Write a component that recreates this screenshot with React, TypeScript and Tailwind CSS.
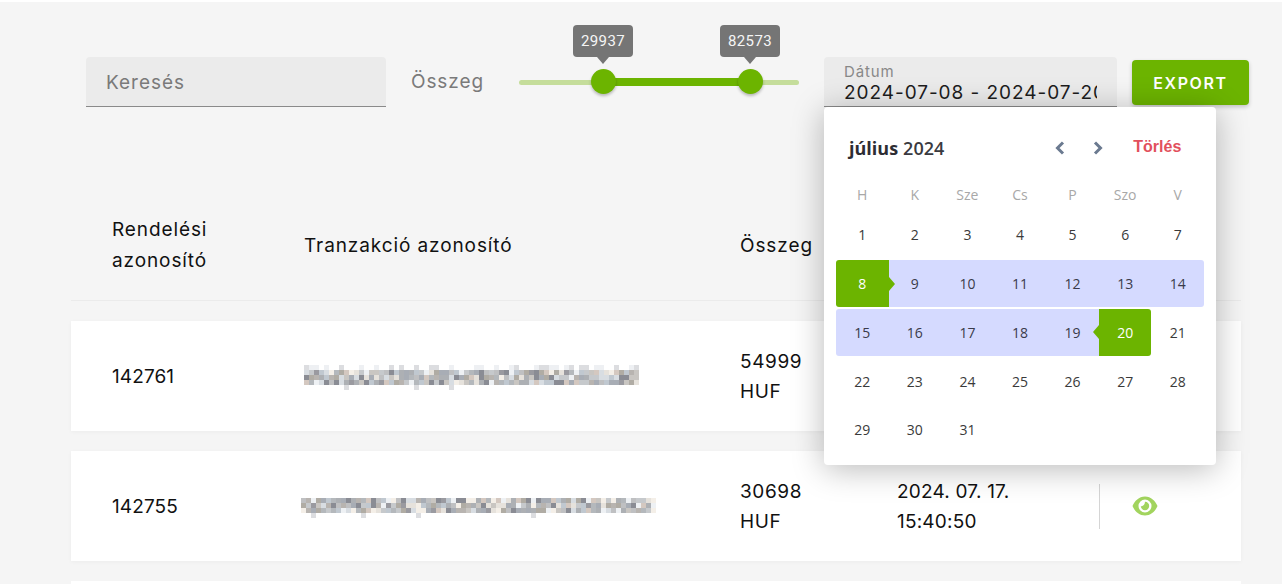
import React from 'react';

const rows = [
  { id: '142761', amount: '54999', seed: 7, width: 67, sparseTop: true, pos: 'mt-[3px]' },
  { id: '142755', amount: '30698', date: '2024. 07. 17.', time: '15:40:50', seed: 23, width: 71, sparseTop: false, pos: 'mt-[4px] -ml-[3px]' },
];

const weekDays = ['H', 'K', 'Sze', 'Cs', 'P', 'Szo', 'V'];
const tints = ['#b8b4b0', '#a8adb5', '#c9c6c2', '#d8dde2', '#9a9aa0', '#c0c8d0', '#e6e2dc', '#b0aca4', '#8a8c94', '#eef1f4', '#d4c8c0', '#bfc0c2', '#adb0b4', '#c6c9cc', '#f4efe8', '#b4b8bc'];

// blurred transaction id, 5px mosaic
const Mosaic: React.FC<{ seed: number; width: number; sparseTop: boolean }> = ({ seed, width, sparseTop }) => {
  const cells: React.ReactNode[] = [];
  let n = seed * 7919;
  const next = () => {
    n = (n * 1103515245 + 12345) & 0x7fffffff;
    return (n >> 16) & 0xff;
  };
  const top = sparseTop ? 1 : 0;
  for (let y = 0; y < top + 4; y++) {
    const sparse = (sparseTop && y === 0) || y === top + 3;
    for (let x = 0; x < width; x++) {
      const r = next();
      if (sparse && y !== 0 && r > 12) continue;
      if (sparse && y === 0 && r > 110) continue;
      const fill = sparse ? (r % 2 ? '#eef0f3' : '#dcdde0') : tints[r % tints.length];
      cells.push(<rect key={`${x}-${y}`} x={x * 5} y={y * 5} width={5} height={5} fill={fill} />);
    }
  }
  return (
    <svg className="block" width={width * 5} height={(top + 4) * 5} shapeRendering="crispEdges">
      {cells}
    </svg>
  );
};

const Thumb: React.FC<{ value: string; className: string }> = ({ value, className }) => (
  <div className={`absolute -top-[32px] w-[60px] flex flex-col items-center ${className}`}>
    <div className="w-[60px] h-[32px] rounded-[4px] bg-[#757575] text-[#f5f5f5] text-[15px] tracking-[0.4px] flex items-center justify-center font-['Roboto',sans-serif]">
      {value}
    </div>
    <div className="w-0 h-0 border-x-[6px] border-x-transparent border-t-[7px] border-t-[#757575]" />
    <div className="w-[25px] h-[25px] rounded-full bg-[#6cb400] mt-[5px] shadow-[0_2px_3px_rgba(0,0,0,0.25)]" />
  </div>
);

const Day: React.FC<{ day: number }> = ({ day }) => {
  const start = day === 8;
  const end = day === 20;
  const inRange = day >= 8 && day <= 20;
  let cls = 'text-[#3a3a3a]';
  if (start || end) cls = 'bg-[#6cb400] text-white';
  else if (inRange) cls = 'bg-[#d5daff] text-[#3a3a4a]';
  if (start || day === 15) cls += ' rounded-l-[3px]';
  if (day === 14 || end) cls += ' rounded-r-[3px]';
  return (
    <div className={`relative h-[47px] flex items-center justify-center text-[14px] ${cls}`}>
      {day}
      {start && <span className="absolute z-10 left-full w-0 h-0 border-y-[7px] border-y-transparent border-l-[6px] border-l-[#6cb400]" />}
      {end && <span className="absolute z-10 right-full w-0 h-0 border-y-[7px] border-y-transparent border-r-[6px] border-r-[#6cb400]" />}
    </div>
  );
};

const Calendar: React.FC = () => (
  <div className="absolute left-0 top-[50px] w-[392px] h-[358px] bg-white rounded-[4px] shadow-[0_4px_32px_rgba(0,0,0,0.28)] z-20 px-3 font-['Open_Sans',sans-serif]">
    <div className="flex items-center h-[82px] pl-[13px]">
      <span className="text-[18px] font-bold text-[#2d2d33]">július</span>
      <span className="text-[18px] font-semibold text-[#3a3a40] ml-[5px]">2024</span>
      <svg className="ml-[110px]" width="12" height="14" viewBox="0 0 12 14" fill="none" stroke="#6b7a90" strokeWidth="3"><path d="M9 1.5 3.5 7 9 12.5" /></svg>
      <svg className="ml-[26px]" width="12" height="14" viewBox="0 0 12 14" fill="none" stroke="#6b7a90" strokeWidth="3"><path d="M3 1.5 8.5 7 3 12.5" /></svg>
      <span className="ml-[29px] -mt-[2px] text-[16px] font-bold text-[#e2505c] font-['Liberation_Sans',sans-serif]">Törlés</span>
    </div>
    <div className="grid grid-cols-7 h-[16px] items-center -mt-[5px] text-[14px] text-[#a8a8a8] text-center">
      {weekDays.map((d) => <div key={d}>{d}</div>)}
    </div>
    <div className="grid grid-cols-7 gap-y-[1.75px] mt-[11.25px]">
      {Array.from({ length: 31 }, (_, i) => <Day key={i} day={i + 1} />)}
    </div>
  </div>
);

const App: React.FC = () => (
  <div className="w-[1282px] h-[584px] overflow-hidden bg-white pt-[2px] font-['Inter',sans-serif]">
    <div className="h-[582px] bg-[#f5f5f5]">
      {/* toolbar */}
      <div className="flex pl-[86px] pt-[55px]">
        <div className="w-[300px] h-[50px] bg-[#ebebeb] rounded-t-[4px] border-b border-[#8a8a8a] flex items-center pl-[20px] pt-[3px] text-[19px] tracking-[1px] text-[#7a7a7a]">
          Keresés
        </div>
        <div className="ml-[25px] h-[50px] w-[108px] flex items-center text-[19px] tracking-[0.9px] text-[#7a7a7a]">Összeg</div>
        <div className="relative w-[280px] h-[50px]">
          <div className="absolute left-0 right-0 top-[23px] h-[5px] rounded-full bg-[#c5dd9b]" />
          <div className="absolute left-[83px] w-[148px] top-[21px] h-[8px] bg-[#6cb400]" />
          <Thumb value="29937" className="left-[54px]" />
          <Thumb value="82573" className="left-[201px]" />
        </div>
        <div className="relative ml-[25px] w-[293px] h-[50px] bg-[#ebebeb] rounded-t-[4px] border-b border-[#8a8a8a] pl-[20px] pt-[6px]">
          <div className="text-[15px] leading-[17px] tracking-[0.9px] text-[#888888]">Dátum</div>
          <div className="w-[253px] overflow-hidden whitespace-nowrap text-[19px] leading-[26px] tracking-[0.95px] text-[#1d1d1d]">2024-07-08 - 2024-07-20</div>
          <Calendar />
        </div>
        <button className="ml-[15px] mt-[3px] w-[117px] h-[45px] bg-[#6cb400] rounded-[4px] text-white text-[16px] font-semibold tracking-[1.6px] shadow-[0_2px_4px_rgba(0,0,0,0.2)]">
          EXPORT
        </button>
      </div>

      {/* table */}
      <div className="ml-[71px] w-[1170px] mt-[83px]">
        <div className="flex items-center h-[111px] border-b border-[#ebebeb] text-[19px] leading-[31px] tracking-[0.9px] text-[#111111]">
          <div className="w-[233px] pl-[41px]">Rendelési<br />azonosító</div>
          <div className="w-[436px]">Tranzakció azonosító</div>
          <div className="w-[157px]">Összeg</div>
        </div>
        <div className="flex flex-col gap-[20px] mt-[20px]">
          {rows.map((r) => (
            <div key={r.id} className="flex items-center h-[110px] bg-white shadow-[0_1px_4px_rgba(0,0,0,0.04)] text-[19px] leading-[30px] text-[#111111]">
              <div className="w-[233px] pl-[41px] pt-[2px] tracking-[0.1px]">{r.id}</div>
              <div className="w-[436px]">
                <div className={r.pos}><Mosaic seed={r.seed} width={r.width} sparseTop={r.sparseTop} /></div>
              </div>
              <div className="w-[157px] pt-[2px] tracking-[0.6px]">{r.amount}<br />HUF</div>
              {r.date && (
                <>
                  <div className="w-[202px] pt-[2px] tracking-[0.2px]">{r.date}<br />{r.time}</div>
                  <div className="h-[45px] border-l border-[#d5d5d5] pl-[32px] flex items-center">
                    <svg width="26" height="20" viewBox="0 0 26 20">
                      <path fillRule="evenodd" fill="#a2d45e" d="M13 0.5C19 0.5 23.5 5 25.5 10 23.5 15 19 19.5 13 19.5S2.5 15 0.5 10C2.5 5 7 0.5 13 0.5ZM13 3.5a6.5 6.5 0 1 0 0 13 6.5 6.5 0 0 0 0-13ZM13 5.8a4.2 4.2 0 1 1-4.2 4.2c1.6.8 4-.8 4.2-4.2Z" />
                    </svg>
                  </div>
                </>
              )}
            </div>
          ))}
          <div className="h-[110px] bg-white" />
        </div>
      </div>
    </div>
  </div>
);

export default App;
